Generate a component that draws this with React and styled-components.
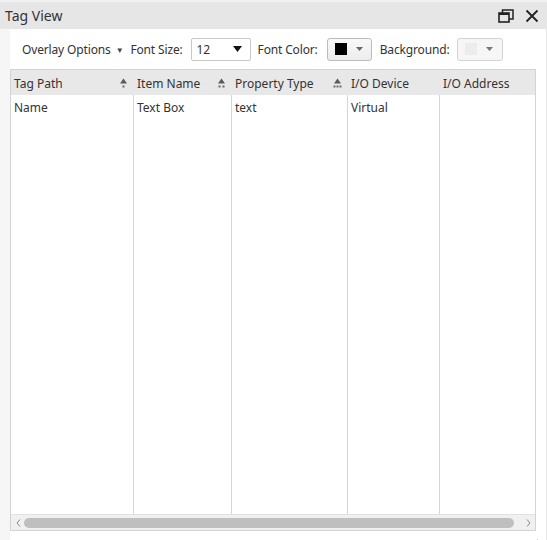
import styled, { createGlobalStyle } from "styled-components";

const GlobalStyle = createGlobalStyle`
  html, body {
    margin: 0;
    padding: 0;
    background: #ffffff;
  }
  * { box-sizing: border-box; }
`;

const Window = styled.div`
  width: 547px;
  height: 540px;
  display: flex;
  flex-direction: column;
  font-family: "Noto Sans", "Open Sans", sans-serif;
  color: #222;
  background: #ffffff;
  overflow: hidden;
`;

const TitleBar = styled.div`
  height: 29px;
  flex-shrink: 0;
  display: flex;
  align-items: center;
  justify-content: space-between;
  padding: 0 8px 0 5px;
  background: #e6e6e6;
  border-top: 2px solid #f1f1f1;
`;

const Title = styled.span`
  font-size: 14px;
  color: #333;
`;

const Controls = styled.div`
  display: flex;
  align-items: center;
  gap: 11px;
`;

const Body = styled.div`
  flex: 1;
  display: flex;
  flex-direction: column;
  padding: 0 2px 9px 10px;
  background: linear-gradient(to right, #f6f6f6 0, #f6f6f6 10px, #ffffff 10px);
  position: relative;
  border-right: 1px solid #e4e4e4;
`;

const Toolbar = styled.div`
  height: 40px;
  display: flex;
  align-items: center;
  padding-left: 12px;
  font-size: 12px;
  letter-spacing: -0.15px;
  color: #333;
  background: #fff;
`;

const Label = styled.span`
  margin-right: ${(p) => p.gap ?? 6}px;
  white-space: nowrap;
`;

const MenuArrow = styled.span`
  font-size: 8px;
  margin: 0 7px 0 5px;
  color: #444;
`;

const Select = styled.div`
  width: 60px;
  height: 23px;
  border: 1px solid #c8c8c8;
  border-radius: 2px;
  display: flex;
  align-items: center;
  justify-content: space-between;
  padding: 0 8px 0 5px;
  margin-right: 7px;
  background: #fff;
  font-size: 12px;
`;

const ColorButton = styled.div`
  width: ${(p) => p.w}px;
  height: 23px;
  border: 1px solid ${(p) => (p.disabled ? "#d4d4d4" : "#bcbcbc")};
  border-radius: 3px;
  background: ${(p) => (p.disabled ? "#f6f6f6" : "linear-gradient(#f9f9f9, #ececec)")};
  display: flex;
  align-items: center;
  padding-left: 7px;
  gap: 9px;
  margin-right: 8px;
`;

const Swatch = styled.div`
  width: 12px;
  height: 12px;
  background: ${(p) => p.color};
`;

const Table = styled.div`
  flex: 1;
  display: flex;
  flex-direction: column;
  width: 526px;
  border: 1px solid #d3d3d3;
  background: #fff;
`;

const HeaderRow = styled.div`
  height: 25px;
  display: grid;
  grid-template-columns: 123px 98px 116px 92px 1fr;
  background: #e8e8e8;
  flex-shrink: 0;
`;

const HeaderCell = styled.div`
  display: flex;
  align-items: center;
  justify-content: space-between;
  padding: 1px 6px 0 3px;
  font-size: 12px;
  color: #333;
`;

const Grid = styled.div`
  flex: 1;
  display: grid;
  grid-template-columns: 123px 98px 116px 92px 1fr;
`;

const Column = styled.div`
  border-right: ${(p) => (p.last ? "none" : "1px solid #d6d6d6")};
`;

const Cell = styled.div`
  height: 25px;
  display: flex;
  align-items: center;
  padding-left: 3px;
  font-size: 12px;
  color: #333;
`;

const Scrollbar = styled.div`
  height: 16px;
  flex-shrink: 0;
  background: #f0f0f0;
  border-top: 1px solid #e2e2e2;
  display: flex;
  align-items: center;
  padding: 0 3px;
`;

const ScrollArrow = styled.div`
  width: 8px;
  display: flex;
  justify-content: center;
  margin: ${(p) => (p.right ? "0 0 0 10px" : "0 2px 0 0")};
`;

const Thumb = styled.div`
  flex: 1;
  height: 10px;
  border-radius: 5px;
  background: #bfbfbf;
`;

const Grip = styled.div`
  position: absolute;
  right: 1px;
  bottom: 0;
  width: 9px;
  height: 9px;
`;

const SortIcon = ({ dots }) => {
  const pos = dots === 1 ? [4.5] : dots === 2 ? [2.5, 6.5] : [1.5, 4.5, 7.5];
  return (
    <svg width="9" height="11" viewBox="0 0 9 11">
      <polygon points="4.5,0.5 8,5.5 1,5.5" fill="#5a5a5a" />
      {pos.map((x) => (
        <rect key={x} x={x - 1} y="7.5" width="2" height="2" fill="#6a6a6a" />
      ))}
    </svg>
  );
};

const columns = [
  { name: "Tag Path", sort: 1, value: "Name" },
  { name: "Item Name", sort: 2, value: "Text Box" },
  { name: "Property Type", sort: 3, value: "text" },
  { name: "I/O Device", value: "Virtual" },
  { name: "I/O Address", value: "" },
];

const App = () => {
  return (
    <Window>
      <GlobalStyle />
      <TitleBar>
        <Title>Tag View</Title>
        <Controls>
          <svg width="16" height="14" viewBox="0 0 16 14">
            <rect x="1" y="4" width="10" height="9" fill="none" stroke="#222" strokeWidth="1.6" />
            <rect x="1" y="4" width="10" height="2" fill="#222" />
            <polyline points="4.5,4 4.5,1 15,1 15,10 11,10" fill="none" stroke="#222" strokeWidth="1.5" />
          </svg>
          <svg width="14" height="14" viewBox="0 0 14 14">
            <path d="M1.5 1.5 L12.5 12.5 M12.5 1.5 L1.5 12.5" stroke="#222" strokeWidth="1.8" />
          </svg>
        </Controls>
      </TitleBar>
      <Body>
        <Toolbar>
          <Label gap={0}>Overlay Options</Label>
          <MenuArrow>▼</MenuArrow>
          <Label gap={8}>Font Size:</Label>
          <Select>
            <span>12</span>
            <svg width="9" height="6" viewBox="0 0 9 6">
              <polygon points="0,0 9,0 4.5,6" fill="#111" />
            </svg>
          </Select>
          <Label gap={9}>Font Color:</Label>
          <ColorButton w={45}>
            <Swatch color="#000" />
            <svg width="7" height="4" viewBox="0 0 7 4">
              <polygon points="0,0 7,0 3.5,4" fill="#666" />
            </svg>
          </ColorButton>
          <Label gap={7}>Background:</Label>
          <ColorButton w={46} disabled>
            <Swatch color="#ececec" />
            <svg width="7" height="4" viewBox="0 0 7 4">
              <polygon points="0,0 7,0 3.5,4" fill="#777" />
            </svg>
          </ColorButton>
        </Toolbar>
        <Table>
          <HeaderRow>
            {columns.map((c) => (
              <HeaderCell key={c.name}>
                <span>{c.name}</span>
                {c.sort && <SortIcon dots={c.sort} />}
              </HeaderCell>
            ))}
          </HeaderRow>
          <Grid>
            {columns.map((c, i) => (
              <Column key={c.name} last={i === columns.length - 1}>
                <Cell>{c.value}</Cell>
              </Column>
            ))}
          </Grid>
          <Scrollbar>
            <ScrollArrow>
              <svg width="5" height="8" viewBox="0 0 5 8">
                <polyline points="4,0.5 1,4 4,7.5" fill="none" stroke="#888" strokeWidth="1" />
              </svg>
            </ScrollArrow>
            <Thumb />
            <ScrollArrow right>
              <svg width="5" height="8" viewBox="0 0 5 8">
                <polyline points="1,0.5 4,4 1,7.5" fill="none" stroke="#888" strokeWidth="1" />
              </svg>
            </ScrollArrow>
          </Scrollbar>
        </Table>
        <Grip>
          <svg width="9" height="9" viewBox="0 0 9 9">
            <path d="M1 1 L7 7 M3 8 L8 8 L8 3 Z" stroke="#444" strokeWidth="1.5" fill="#444" />
          </svg>
        </Grip>
      </Body>
    </Window>
  );
};

export default App;
